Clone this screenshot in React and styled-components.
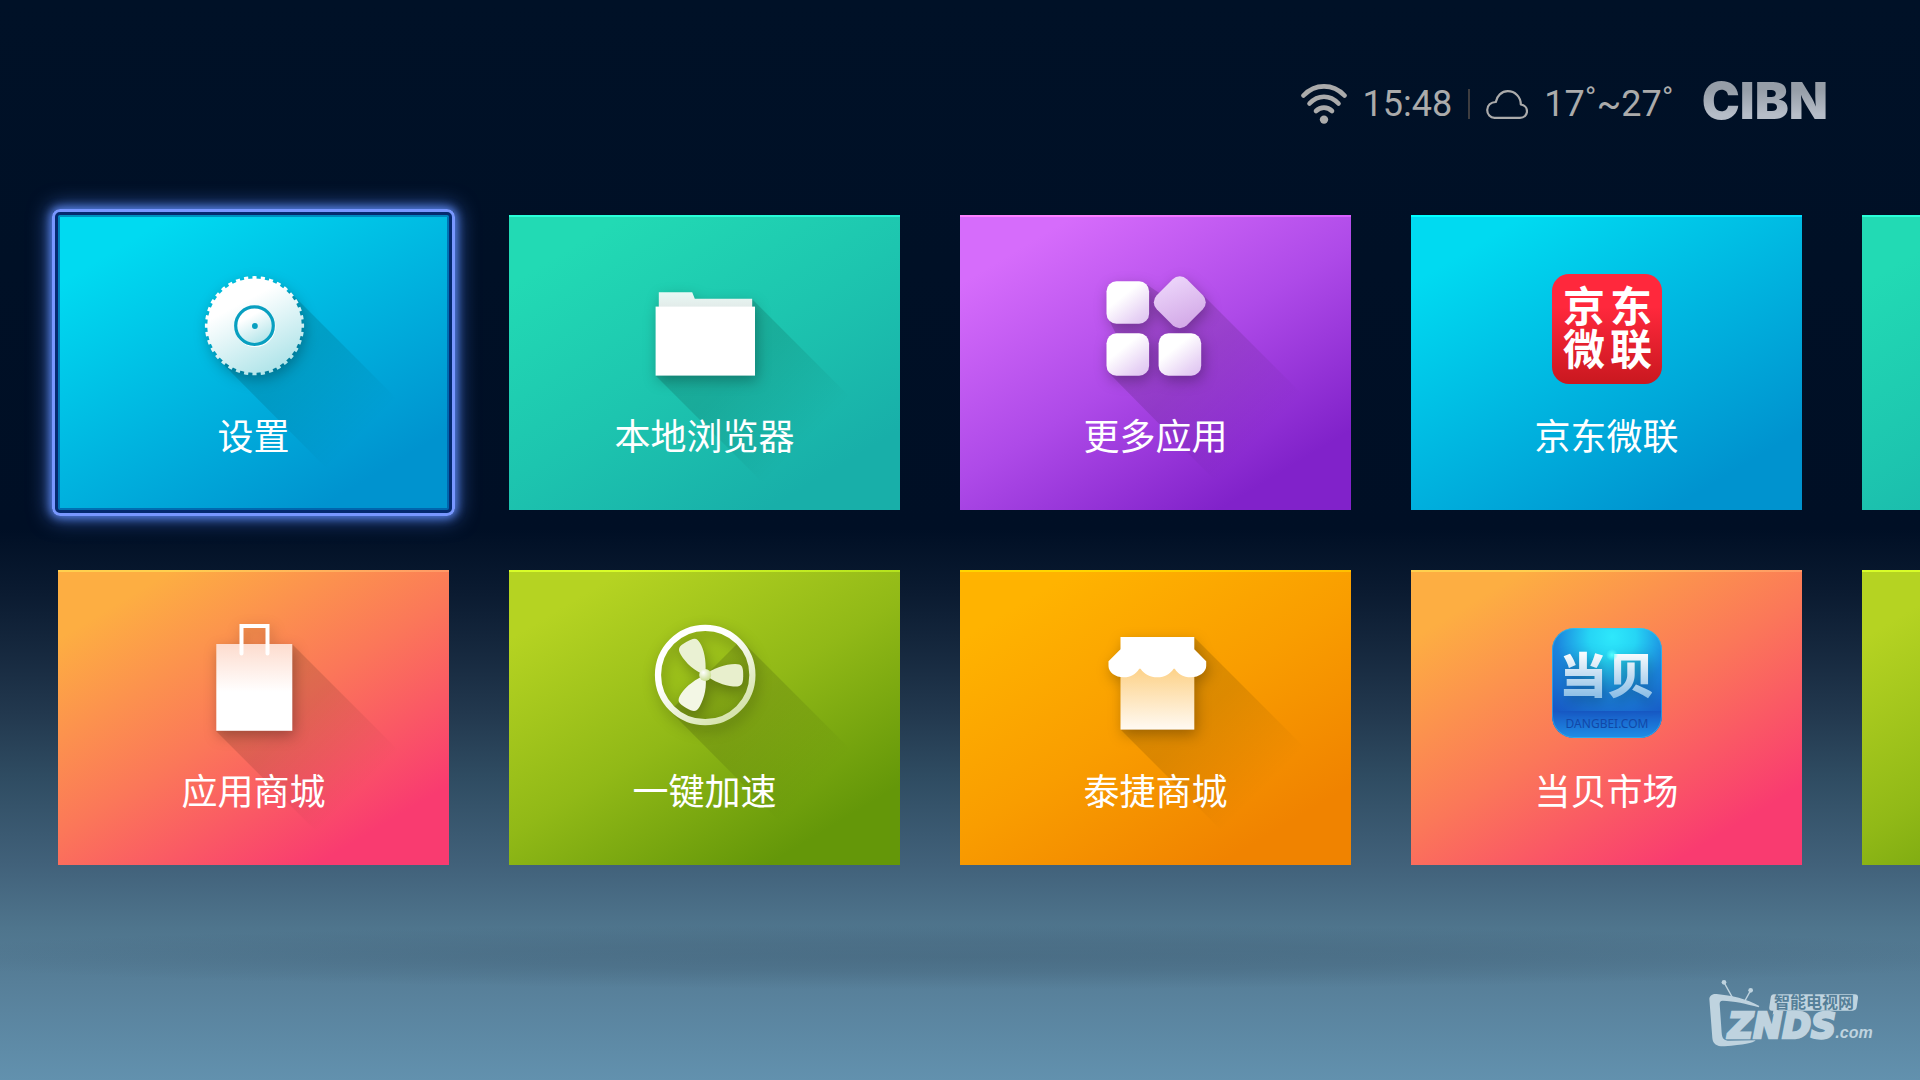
import React from 'react';
import styled, { createGlobalStyle, css } from 'styled-components';

const GlobalStyle = createGlobalStyle`
  *,
  *::before,
  *::after {
    box-sizing: border-box;
  }

  body {
    margin: 0;
    background: #000f25;
    font-family: Roboto, 'Noto Sans CJK SC', sans-serif;
  }
`;

const themes = {
  blue: ['#00daf1', '#00b5e0', '#0093cf'],
  teal: ['#22dab4', '#1dc5af', '#18afa9'],
  purple: ['#d66cfb', '#ae4ae8', '#8122ca'],
  coral: ['#fdae42', '#fb7759', '#f93b70'],
  lime: ['#b5d322', '#91b917', '#649709'],
  amber: ['#ffb300', '#f99d00', '#f08300'],
};

const Screen = styled.div`
  display: flex;
  flex-direction: column;
  min-height: 100vh;
  overflow: hidden;
  color: #fff;
  background: radial-gradient(
      ellipse 56% 3% at 50% 88.6%,
      rgba(62, 92, 114, 0.42),
      rgba(62, 92, 114, 0.3) 45%,
      rgba(62, 92, 114, 0)
    ),
    linear-gradient(
      #001127 0%,
      #000f25 49%,
      #0b1b31 55%,
      #172a40 61%,
      #22384e 66%,
      #2f4c62 72%,
      #41617a 80%,
      #4f758d 86%,
      #577f99 91%,
      #6291ae 100%
    );
`;

const StatusBar = styled.header`
  display: flex;
  align-items: center;
  justify-content: flex-end;
  gap: 16px;
  height: 60px;
  margin-top: 74px;
  padding-right: 92px;
  color: #ababab;
  font-size: 36px;
  line-height: 60px;
`;

const Divider = styled.span`
  width: 2px;
  height: 30px;
  background: #3e3d40;
`;

const Temperature = styled.span`
  margin-right: 12px;
`;

const Brand = styled.strong`
  align-self: flex-start;
  font-family: Inter, sans-serif;
  font-size: 51px;
  font-weight: 900;
  line-height: 54px;
  background: linear-gradient(#969ea8 30%, #b6bdc8 75%);
  background-clip: text;
  color: transparent;
`;

const Shelf = styled.main`
  display: grid;
  grid-auto-flow: column;
  grid-auto-columns: calc((100% - 298px) / 4);
  grid-template-rows: repeat(2, auto);
  gap: 60px;
  margin-top: 81px;
  padding-left: 58px;
`;

const focusRing = css`
  &::after {
    content: '';
    position: absolute;
    inset: -6px;
    border: 3px solid #7897ff;
    border-radius: 8px;
    box-shadow: inset 0 0 0 3px #052a70, inset 0 0 0 5px rgba(0, 70, 150, 0.6),
      0 0 8px 2px rgba(100, 145, 255, 0.8), 0 0 20px 4px rgba(80, 125, 235, 0.6);
  }
`;

const TileButton = styled.button`
  position: relative;
  display: flex;
  flex-direction: column;
  align-items: center;
  min-height: 295px;
  padding: 58px 0 48px;
  border: 0;
  outline: 0;
  color: #fff;
  font: inherit;
  cursor: pointer;
  background: linear-gradient(#2a2a2a, #2a2a2a) top / 100% 2px no-repeat,
    linear-gradient(
      149deg,
      ${({ $theme }) => themes[$theme][0]} 13%,
      ${({ $theme }) => themes[$theme][1]} 50%,
      ${({ $theme }) => themes[$theme][2]} 85%
    );
  background-blend-mode: color-dodge, normal;
  ${({ $focused }) => $focused && focusRing};
`;

const TileLabel = styled.span`
  margin-top: 24px;
  font-family: 'Noto Sans CJK SC', sans-serif;
  font-size: 36px;
  line-height: 54px;
  white-space: nowrap;
`;

const Art = styled.svg`
  display: block;
  width: 110px;
  height: 110px;
  overflow: visible;
`;

const Raised = styled.g`
  filter: drop-shadow(2px 5px 7px rgba(0, 0, 0, 0.28));
`;

const Footer = styled.footer`
  display: flex;
  justify-content: flex-end;
  margin-top: auto;
  padding: 0 46px 32px 0;
`;

const LongShadow = ({ id, points }) => (
  <>
    <linearGradient
      id={id}
      gradientUnits="userSpaceOnUse"
      x1="50"
      y1="50"
      x2="162"
      y2="162"
    >
      <stop offset="0" stopOpacity="0.14" />
      <stop offset="0.4" stopOpacity="0.11" />
      <stop offset="1" stopOpacity="0" />
    </linearGradient>
    <polygon points={points} fill={`url(#${id})`} />
  </>
);

const SettingsIcon = () => (
  <Art viewBox="0 0 110 110" aria-hidden="true">
    <defs>
      <linearGradient id="gear" x1="0.25" y1="0.1" x2="0.7" y2="0.95">
        <stop offset="0.2" stopColor="#fff" />
        <stop offset="1" stopColor="#b2e5ea" />
      </linearGradient>
    </defs>
    <LongShadow id="gearShadow" points="90,18 230,158 160,228 21,88" />
    <Raised>
      <circle cx="55.5" cy="52.7" r="47.2" fill="url(#gear)" />
      <circle
        cx="55.5"
        cy="52.7"
        r="48"
        fill="none"
        stroke="url(#gear)"
        strokeWidth="3.2"
        pathLength="72"
        strokeDasharray="1 1"
        strokeDashoffset="0.5"
      />
    </Raised>
    <circle cx="56" cy="53.4" r="19.6" fill="none" stroke="#fff" strokeWidth="2" />
    <circle
      cx="55.5"
      cy="52.7"
      r="18.8"
      fill="url(#gear)"
      stroke="#089fc0"
      strokeWidth="3.2"
    />
    <circle cx="55.9" cy="53" r="2.9" fill="#089fc0" />
  </Art>
);

const FolderIcon = () => (
  <Art viewBox="0 0 110 110" aria-hidden="true">
    <defs>
      <linearGradient id="folderBack" x1="0" y1="0" x2="0" y2="1">
        <stop offset="0" stopColor="#e8f9f5" />
        <stop offset="1" stopColor="#e2ebe9" />
      </linearGradient>
    </defs>
    <LongShadow id="folderShadow" points="102,26 240,164 144,241 6,103" />
    <Raised>
      <path
        d="M8.8 34V19.3H42.2L44.8 25.7H102.2V34Z"
        fill="url(#folderBack)"
      />
      <rect x="5.6" y="33.6" width="99.4" height="69" fill="#fff" />
    </Raised>
  </Art>
);

const AppsIcon = () => (
  <Art viewBox="0 0 110 110" aria-hidden="true">
    <defs>
      <linearGradient id="app" x1="0.1" y1="0" x2="0.9" y2="1">
        <stop offset="0.35" stopColor="#fff" />
        <stop offset="0.8" stopColor="#e8d4f5" />
        <stop offset="1" stopColor="#dfc5f1" />
      </linearGradient>
      <linearGradient id="appTurned" x1="0" y1="0.3" x2="1" y2="0.7">
        <stop offset="0" stopColor="#ebd3f9" />
        <stop offset="1" stopColor="#d4abe8" />
      </linearGradient>
    </defs>
    <LongShadow id="appsShadow" points="45,11 79,34 102,22 236,156 142,236 8,100 22,75 9,49" />
    <Raised>
      <rect x="5.5" y="8.2" width="42.6" height="42.6" rx="10" fill="url(#app)" />
      <rect x="5.5" y="60.2" width="42.6" height="42.6" rx="10" fill="url(#app)" />
      <rect x="57.6" y="60.2" width="42.6" height="42.6" rx="10" fill="url(#app)" />
      <rect
        x="57.5"
        y="8"
        width="42.6"
        height="42.6"
        rx="10"
        fill="url(#appTurned)"
        transform="rotate(45 78.8 29.3)"
      />
    </Raised>
  </Art>
);

const BagIcon = () => (
  <Art viewBox="0 0 110 110" aria-hidden="true">
    <defs>
      <linearGradient id="bag" x1="0" y1="0" x2="0" y2="1">
        <stop offset="0" stopColor="#fddcce" />
        <stop offset="0.55" stopColor="#fff" />
      </linearGradient>
    </defs>
    <LongShadow id="bagShadow" points="93,16 238,161 162,248 17,103" />
    <Raised>
      <rect x="17.3" y="16" width="76" height="86.8" fill="url(#bag)" />
      <path
        d="M42.5 25.5V-2H68.5V25.5"
        fill="none"
        stroke="#fff"
        strokeWidth="4"
        strokeLinecap="round"
      />
    </Raised>
  </Art>
);

const FanIcon = () => {
  const blade =
    'M0 0C8 -7 20 -11 30 -11C37 -11 38 -8 38 0C38 9 37 12 28 11.5C19 11 8 6 0 0Z';
  return (
    <Art viewBox="0 0 110 110" aria-hidden="true">
      <defs>
        <linearGradient id="fanRing" x1="0.2" y1="0.1" x2="0.8" y2="0.9">
          <stop offset="0.3" stopColor="#fff" />
          <stop offset="1" stopColor="#d7e4ae" />
        </linearGradient>
        <radialGradient id="fanHub" cx="0.35" cy="0.3" r="0.8">
          <stop offset="0" stopColor="#fff" />
          <stop offset="1" stopColor="#c3da84" />
        </radialGradient>
      </defs>
      <LongShadow id="fanShadow" points="91,12 236,157 164,228 20,83" />
      <Raised>
        <circle
          cx="55.2"
          cy="47"
          r="47.2"
          fill="none"
          stroke="url(#fanRing)"
          strokeWidth="6.2"
        />
        <g transform="translate(55.2 47)">
          <path d={blade} fill="#e8efcd" />
          <path d={blade} fill="#f3f7e5" transform="rotate(120)" />
          <path d={blade} fill="#eaf1d3" transform="rotate(240)" />
          <circle r="6" fill="url(#fanHub)" />
        </g>
      </Raised>
    </Art>
  );
};

const ShopIcon = () => (
  <Art viewBox="0 0 110 110" aria-hidden="true">
    <defs>
      <linearGradient id="shop" x1="0" y1="0" x2="0" y2="1">
        <stop offset="0.1" stopColor="#fdd38c" />
        <stop offset="1" stopColor="#fffaf3" />
      </linearGradient>
    </defs>
    <LongShadow id="shopShadow" points="93,9 238,154 164,246 20,102" />
    <Raised>
      <rect x="19.5" y="36" width="73.8" height="65.6" fill="url(#shop)" />
      <path
        d="M19.5 9H93.3V21.3L105.2 33.3V38C105.2 44 98 49.3 90 49.3C82 49.3 77 46 73.8 40.7H72.6C69 46 64 49.3 56.4 49.3C49 49.3 43 46 39.6 40.7H38.2C35 46 30 49.3 22.8 49.3C14 49.3 7.5 44 7.5 38V33.3L19.5 21.3Z"
        fill="#fff"
      />
    </Raised>
  </Art>
);

const JdLogo = () => (
  <Art viewBox="0 0 110 110" aria-hidden="true">
    <defs>
      <linearGradient id="jd" x1="0" y1="0" x2="0" y2="1">
        <stop offset="0.3" stopColor="#ff283c" />
        <stop offset="1" stopColor="#c9181f" />
      </linearGradient>
    </defs>
    <rect y="1" width="110" height="110" rx="17" fill="url(#jd)" />
    <text
      fill="#fff"
      fontFamily="'Noto Sans CJK SC', sans-serif"
      fontSize="42"
      fontWeight="700"
      textAnchor="middle"
    >
      <tspan x="32" y="49">京</tspan>
      <tspan x="79" y="49">东</tspan>
      <tspan x="32" y="92">微</tspan>
      <tspan x="79" y="92">联</tspan>
    </text>
  </Art>
);

const DangbeiLogo = () => (
  <Art viewBox="0 0 110 110" aria-hidden="true">
    <defs>
      <radialGradient id="db" cx="0.55" cy="0.08" r="0.85">
        <stop offset="0" stopColor="#2ee8fb" />
        <stop offset="0.25" stopColor="#26d5f5" />
        <stop offset="0.6" stopColor="#1b86de" />
        <stop offset="1" stopColor="#1858c6" />
      </radialGradient>
      <linearGradient id="dbBase" x1="0" y1="0" x2="0" y2="1">
        <stop offset="0" stopColor="#1758c4" />
        <stop offset="1" stopColor="#1f8ee6" />
      </linearGradient>
      <linearGradient id="dbText" x1="0" y1="0" x2="0" y2="1">
        <stop offset="0.2" stopColor="#fff" />
        <stop offset="0.85" stopColor="#8dbfe6" />
      </linearGradient>
      <radialGradient id="dbSpark">
        <stop offset="0" stopColor="#5ff" />
        <stop offset="1" stopColor="#5ff" stopOpacity="0" />
      </radialGradient>
    </defs>
    <rect width="110" height="110" rx="22" fill="url(#db)" />
    <path d="M0 83H110V88A22 22 0 0 1 88 110H22A22 22 0 0 1 0 88Z" fill="url(#dbBase)" />
    <rect
      x="0.5"
      y="0.5"
      width="109"
      height="109"
      rx="21.5"
      fill="none"
      stroke="#3fc6f2"
      strokeOpacity="0.5"
    />
    <Raised
      fill="url(#dbText)"
      fontFamily="'Noto Sans CJK SC', sans-serif"
      fontSize="48"
      fontWeight="900"
      textAnchor="middle"
    >
      <text x="31" y="65">当</text>
      <text x="79" y="65">贝</text>
    </Raised>
    <circle cx="60" cy="27" r="6" fill="url(#dbSpark)" />
    <text
      x="55"
      y="100"
      fill="#1148a8"
      fontFamily="'Noto Sans', sans-serif"
      fontSize="12"
      textAnchor="middle"
    >
      DANGBEI.COM
    </text>
  </Art>
);

const WifiIcon = () => (
  <svg width="46" height="40" viewBox="0 0 46 40" aria-label="Wi-Fi" role="img">
    <g fill="none" stroke="#ababab" strokeWidth="4.6" strokeLinecap="round">
      <path d="M2.5 11.5C14 -0.7 32 -0.7 43.5 11.5" />
      <path d="M8.5 19.5C17 10.5 29 10.5 37.5 19.5" />
      <path d="M15 27C19.5 22.5 26.5 22.5 31 27" />
    </g>
    <circle cx="23" cy="35.6" r="4.2" fill="#ababab" />
  </svg>
);

const CloudIcon = () => (
  <svg width="42" height="29" viewBox="0 0 42 29" aria-label="多云" role="img">
    <path
      d="M8.5 27.8H34C38 27.8 41 25 41 21.3C41 17.7 38.3 15 34.8 14.5C34.8 6.8 29 1.2 21.8 1.2C15.5 1.2 10.8 6 9.8 12C4.8 12 1.2 15.4 1.2 20C1.2 24.4 4.3 27.8 8.5 27.8Z"
      fill="none"
      stroke="#ababab"
      strokeWidth="2.2"
      strokeLinejoin="round"
    />
  </svg>
);

const Watermark = () => (
  <svg width="166" height="70" viewBox="54 26 498 210" aria-label="ZNDS.com" role="img">
    <g fill="#bfd3df">
      <path d="M58 88C59 78 68 73 80 74C125 79 170 88 208 110L206 114C170 103 130 95 98 94C91 94 89 98 89 104L95 190C96 208 103 214 118 214L197 213C190 222 160 226 104 231C82 232 69 226 67 206Z" />
      <circle cx="102" cy="39" r="7" />
      <circle cx="182" cy="63" r="7" />
      <path d="M102 39L127 84M182 63L165 94" stroke="#bfd3df" strokeWidth="4" />
      <path d="M252 75H494Q505 75 504 86L500 114Q498 124 488 124H264L248 136L250 124H246Q236 124 238 112L242 86Q243 75 252 75Z" />
    </g>
    <text fill="#bfd3df" fontWeight="700">
      <tspan
        x="252"
        y="117"
        fill="#557f98"
        fontFamily="'Noto Sans CJK SC', sans-serif"
        fontSize="48"
      >
        智能电视网
      </tspan>
      <tspan
        x="114"
        y="206"
        fontFamily="'DejaVu Sans', sans-serif"
        fontSize="104"
        fontStyle="italic"
        stroke="#bfd3df"
        strokeWidth="8"
      >
        ZNDS
      </tspan>
      <tspan
        x="436"
        y="207"
        fontFamily="'Liberation Sans', sans-serif"
        fontSize="48"
        fontStyle="italic"
      >
        .com
      </tspan>
    </text>
  </svg>
);

// Listed column by column, top tile first.
const tiles = [
  { label: '设置', theme: 'blue', Icon: SettingsIcon, focused: true },
  { label: '应用商城', theme: 'coral', Icon: BagIcon },
  { label: '本地浏览器', theme: 'teal', Icon: FolderIcon },
  { label: '一键加速', theme: 'lime', Icon: FanIcon },
  { label: '更多应用', theme: 'purple', Icon: AppsIcon },
  { label: '泰捷商城', theme: 'amber', Icon: ShopIcon },
  { label: '京东微联', theme: 'blue', Icon: JdLogo },
  { label: '当贝市场', theme: 'coral', Icon: DangbeiLogo },
];

const App = () => (
  <Screen>
    <GlobalStyle />
    <StatusBar>
      <WifiIcon />
      <time>15:48</time>
      <Divider />
      <CloudIcon />
      <Temperature>17˚~27˚</Temperature>
      <Brand>CIBN</Brand>
    </StatusBar>
    <Shelf>
      {tiles.map(({ label, theme, Icon, focused }) => (
        <TileButton key={label} type="button" $theme={theme} $focused={focused}>
          <Icon />
          <TileLabel>{label}</TileLabel>
        </TileButton>
      ))}
      <TileButton type="button" $theme="teal" aria-label="下一页" />
      <TileButton type="button" $theme="lime" aria-label="下一页" />
    </Shelf>
    <Footer>
      <Watermark />
    </Footer>
  </Screen>
);

export default App;
